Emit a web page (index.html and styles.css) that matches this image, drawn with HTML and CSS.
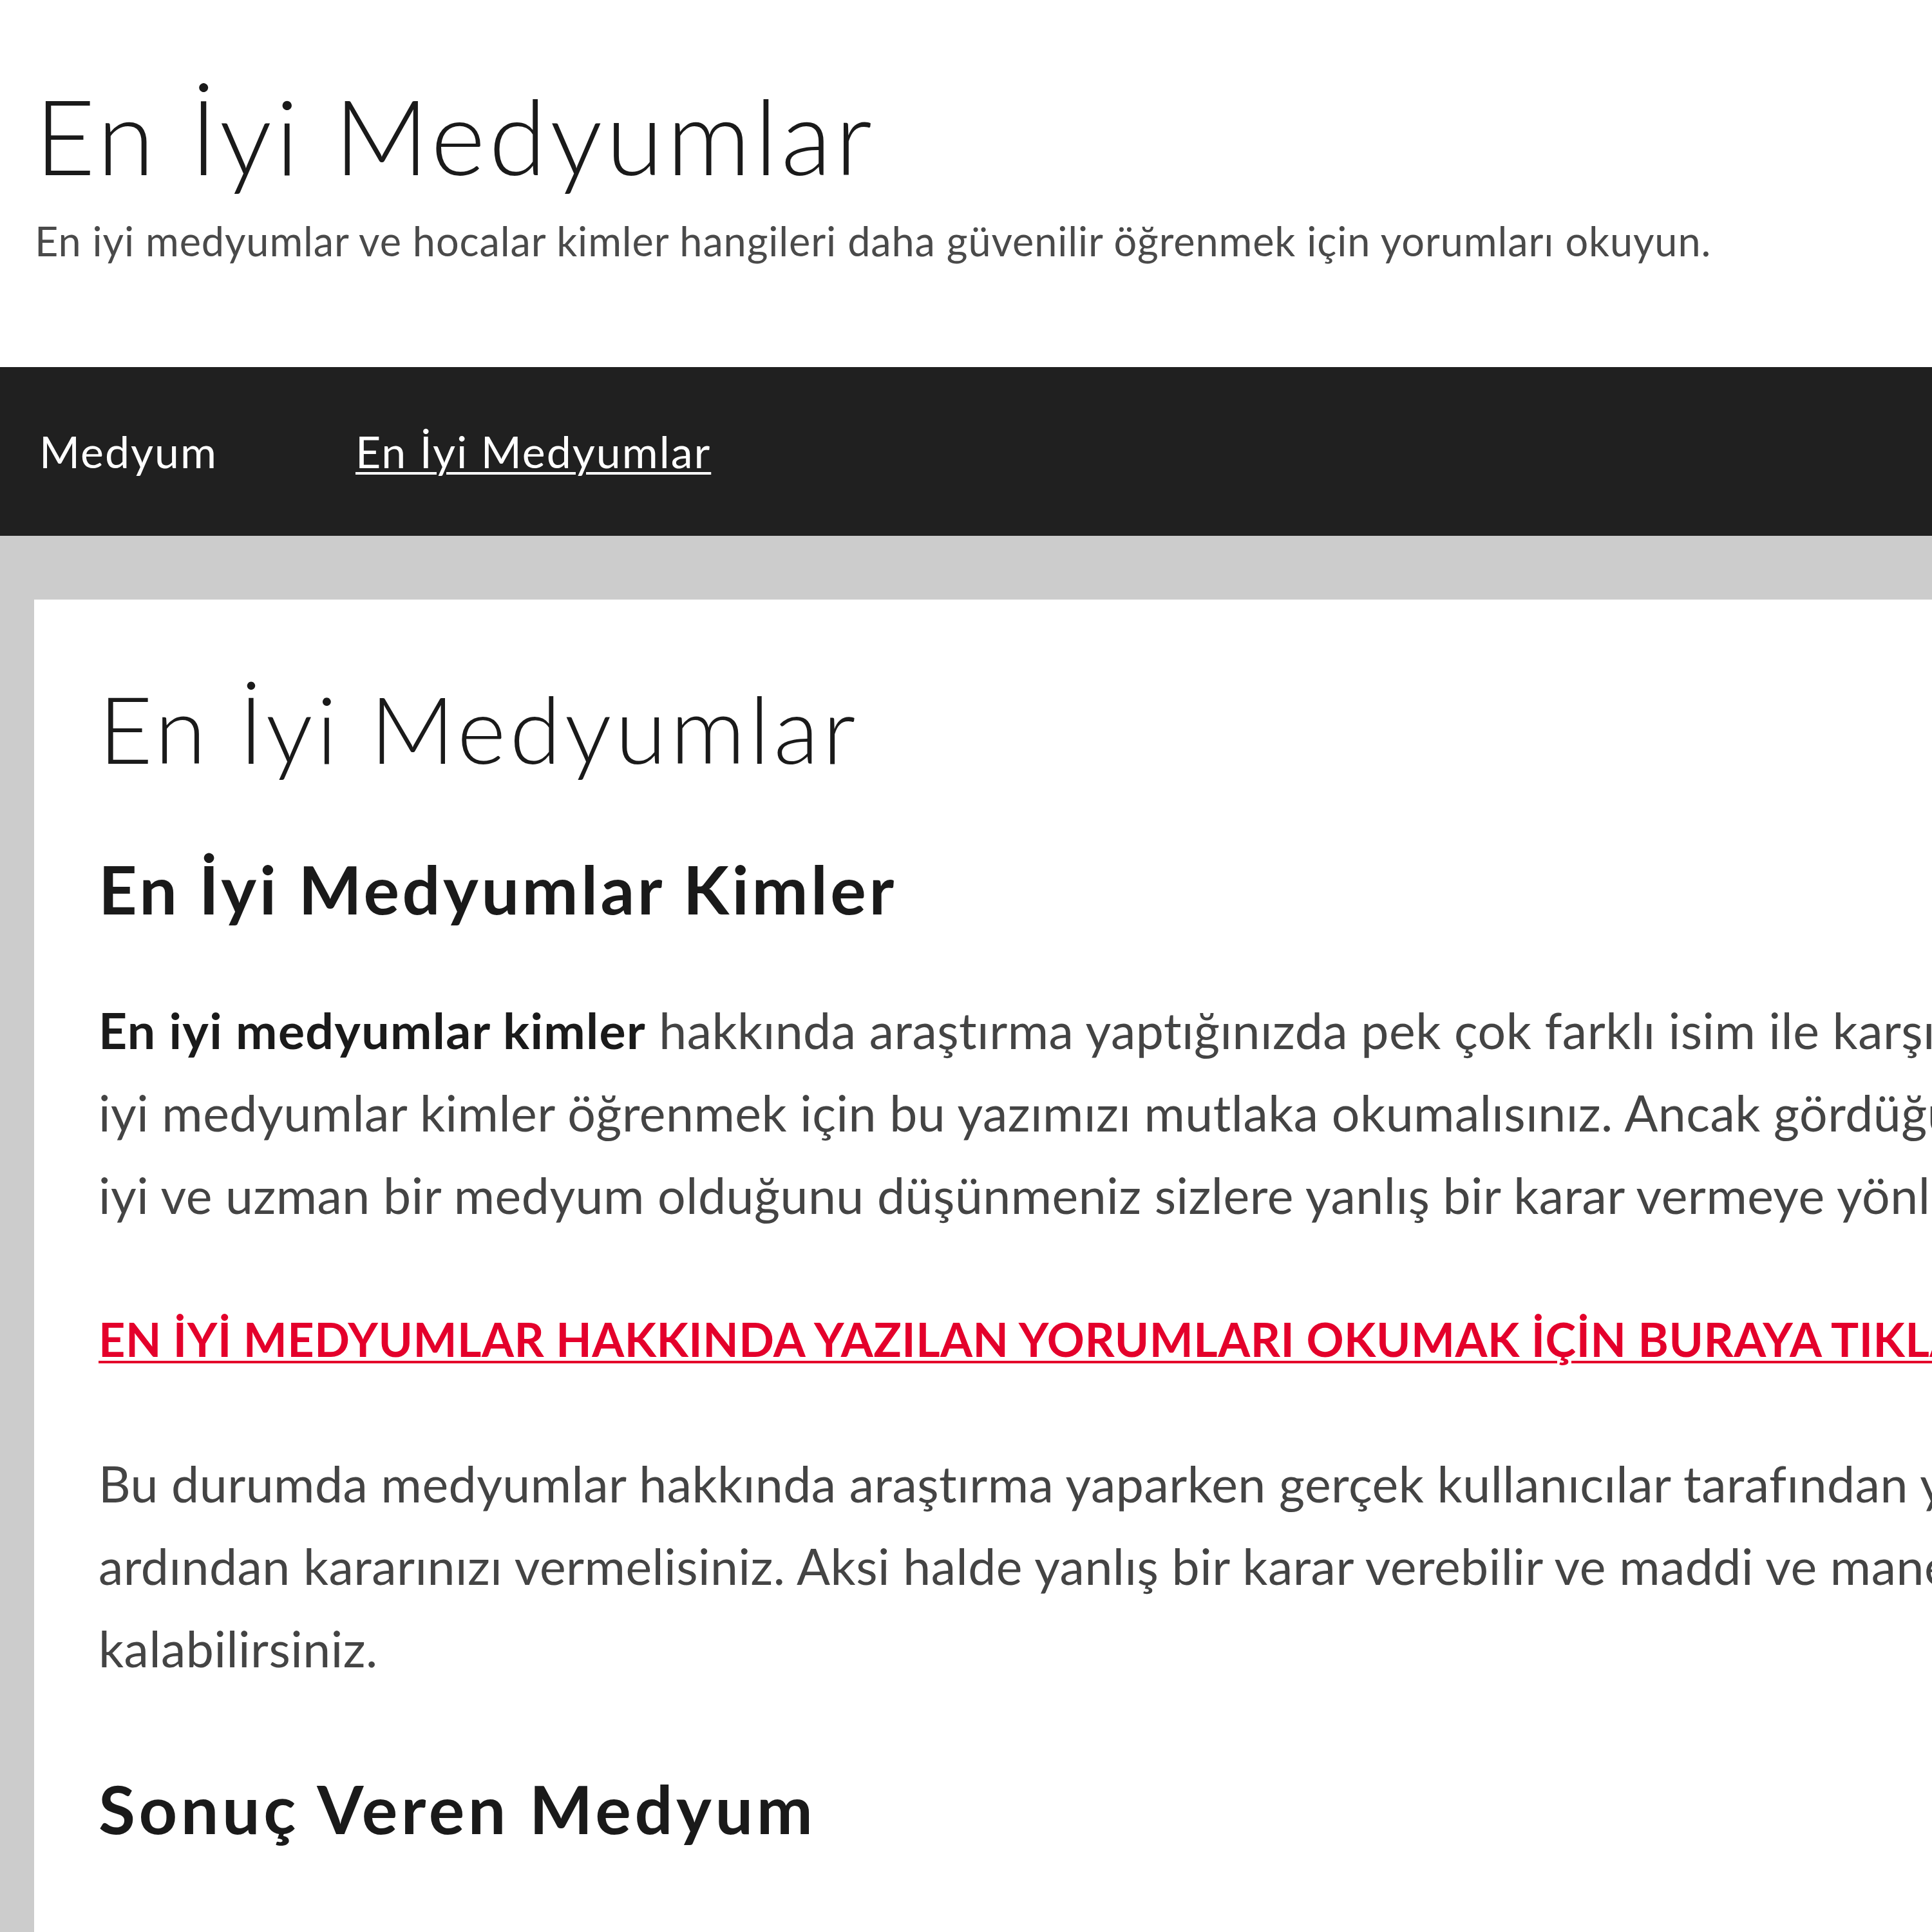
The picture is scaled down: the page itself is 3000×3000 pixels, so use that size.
FILE: index.html
```html
<!DOCTYPE html>
<html lang="tr">
<head>
    <meta charset="utf-8">
    <title>En İyi Medyumlar</title>
    <link rel="stylesheet" href="styles.css">
</head>
<body>
    <header class="site_header">
        <h1 class="site_title">En İyi Medyumlar</h1>
        <p class="site_desc">En iyi medyumlar ve hocalar kimler hangileri daha güvenilir öğrenmek için yorumları okuyun.</p>
    </header>

    <nav class="main_nav">
        <a href="#">Medyum</a>
        <a href="#" class="current">En İyi Medyumlar</a>
    </nav>

    <main class="site_main">
        <article class="entry">
            <h1 class="entry_title">En İyi Medyumlar</h1>
            <h2>En İyi Medyumlar Kimler</h2>
            <p><strong>En iyi medyumlar kimler</strong> hakkında araştırma yaptığınızda pek çok farklı isim ile karşılaşabilirsiniz. En<br>iyi medyumlar kimler öğrenmek için bu yazımızı mutlaka okumalısınız. Ancak gördüğünüz her reklamda yer alan kişinin en<br>iyi ve uzman bir medyum olduğunu düşünmeniz sizlere yanlış bir karar vermeye yönlendirebilir.</p>
            <p class="link_para"><a href="#" class="red_link">EN İYİ MEDYUMLAR HAKKINDA YAZILAN YORUMLARI OKUMAK İÇİN BURAYA TIKLAYINIZ</a></p>
            <p>Bu durumda medyumlar hakkında araştırma yaparken gerçek kullanıcılar tarafından yazılan yorumları okumalı ve<br>ardından kararınızı vermelisiniz. Aksi halde yanlış bir karar verebilir ve maddi ve manevi zarara uğrayarak mağdur<br>kalabilirsiniz.</p>
            <h2 class="last">Sonuç Veren Medyum</h2>
        </article>
    </main>
</body>
</html>
```

FILE: styles.css
```css
* {
    margin: 0;
    padding: 0;
    box-sizing: border-box;
}

body {
    font-family: Lato, "Open Sans", sans-serif;
    background: #ccc;
    color: #444;
    overflow: hidden;
}

a {
    color: inherit;
}

/* ust baslik */
.site_header {
    height: 570px;
    padding: 113px 0 0 54px;
    background: #fff;
    color: #1a1a1a;
}

.site_title {
    font-size: 162px;
    line-height: 194px;
    font-weight: 300;
    letter-spacing: 5.6px;
}

.site_desc {
    margin-top: 32px;
    font-size: 63px;
    line-height: 70px;
    letter-spacing: 0.9px;
    color: #4a4a4a;
    white-space: nowrap;
}

/* menu */
.main_nav {
    height: 262px;
    padding-left: 61px;
    display: flex;
    align-items: center;
    gap: 214px;
    background: #202020;
}

.main_nav a {
    color: #fff;
    font-size: 68px;
    line-height: 82px;
    letter-spacing: 2px;
    text-decoration: none;
}

.main_nav a.current {
    text-decoration: underline;
    text-decoration-thickness: 4px;
    text-underline-offset: 6px;
}

/* icerik */
.site_main {
    padding: 99px 0 0 53px;
}

.entry {
    width: 3400px;
    min-height: 2100px;
    padding: 112px 0 0 100px;
    background: #fff;
}

.entry_title {
    font-size: 145px;
    line-height: 174px;
    font-weight: 300;
    letter-spacing: 5.8px;
    color: #1a1a1a;
}

.entry h2 {
    margin: 100px 0 93px;
    font-size: 104px;
    line-height: 125px;
    font-weight: 700;
    letter-spacing: 4.5px;
    color: #1a1a1a;
}

.entry h2.last {
    margin-top: 122px;
    letter-spacing: 5.6px;
}

.entry p {
    margin-bottom: 96px;
    font-size: 77px;
    line-height: 128px;
    letter-spacing: 0.5px;
    white-space: nowrap;
}

.entry p strong {
    letter-spacing: 1.3px;
    color: #1a1a1a;
}

.entry .link_para {
    font-size: 72px;
}

.red_link {
    color: #e4002b;
    font-weight: 700;
    text-decoration-thickness: 4px;
    text-underline-offset: 6px;
}
```
